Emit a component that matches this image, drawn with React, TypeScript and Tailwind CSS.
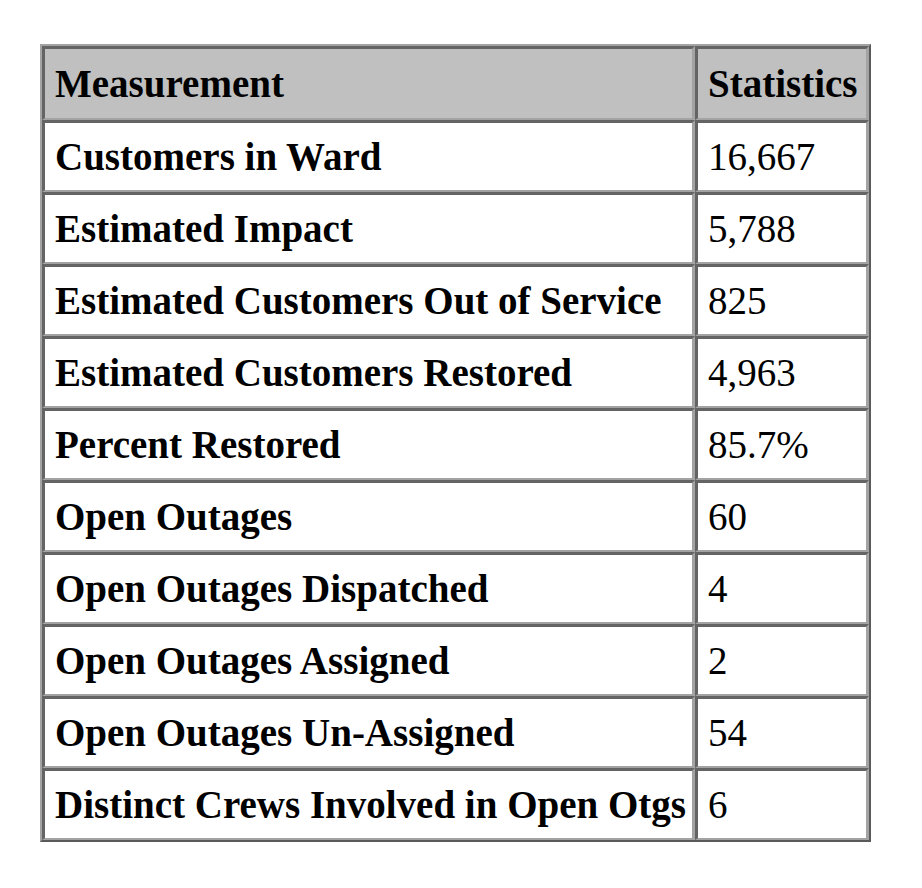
import React from "react";

const rows: [string, string][] = [
  ["Customers in Ward", "16,667"],
  ["Estimated Impact", "5,788"],
  ["Estimated Customers Out of Service", "825"],
  ["Estimated Customers Restored", "4,963"],
  ["Percent Restored", "85.7%"],
  ["Open Outages", "60"],
  ["Open Outages Dispatched", "4"],
  ["Open Outages Assigned", "2"],
  ["Open Outages Un-Assigned", "54"],
  ["Distinct Crews Involved in Open Otgs", "6"],
];

const cell =
  "flex items-center pl-[10px] border-t-[3px] border-l-[3px] border-r-[3px] border-b-[2px] border-t-[#646464] border-l-[#646464] border-r-[#a3a3a3] border-b-[#a3a3a3] whitespace-nowrap";

export default function App() {
  return (
    <div className="bg-white w-[922px] h-[888px] pt-[44px] pl-[40px] text-black" style={{ fontFamily: '"Liberation Serif", "Times New Roman", serif' }}>
      <div className="w-[831px] border-2 border-t-[#a3a3a3] border-l-[#a3a3a3] border-r-[#5a5a5a] border-b-[#5a5a5a]">
        <div className="grid grid-cols-[653px_1fr] text-[39px] leading-none">
          <div className={`${cell} h-[74px] bg-[#c0c0c0] font-bold`}>Measurement</div>
          <div className={`${cell} h-[74px] bg-[#c0c0c0] font-bold`}>Statistics</div>
          {rows.map(([k, v]) => (
            <React.Fragment key={k}>
              <div className={`${cell} h-[72px] font-bold`}>{k}</div>
              <div className={`${cell} h-[72px]`}>{v}</div>
            </React.Fragment>
          ))}
        </div>
      </div>
    </div>
  );
}
